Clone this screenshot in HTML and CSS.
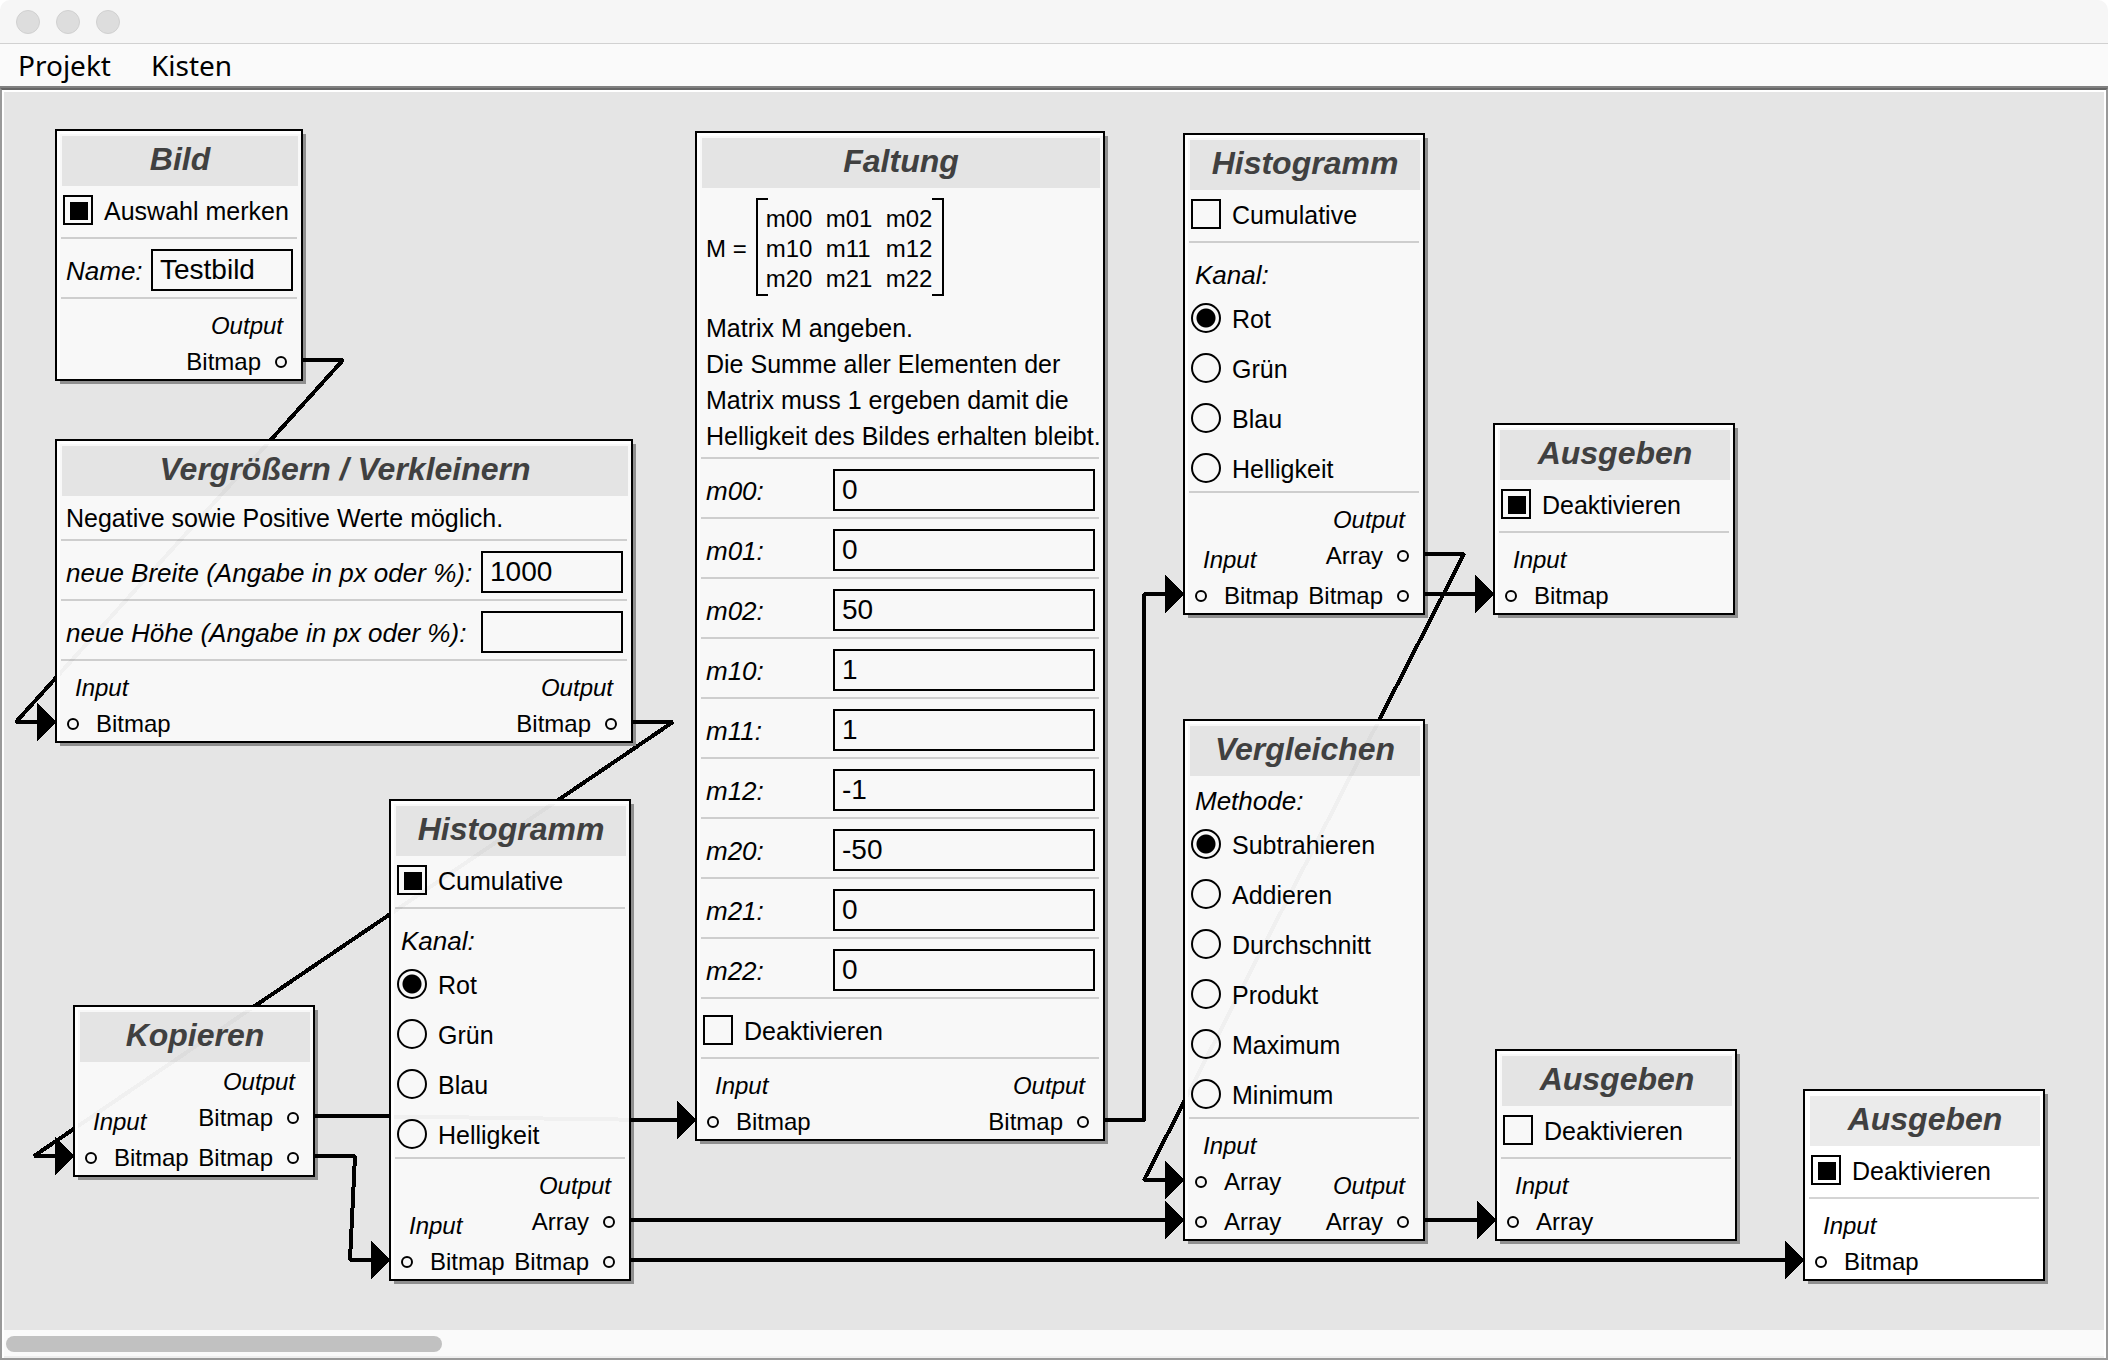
FILE: index.html
```html
<!DOCTYPE html>
<html lang="de">
<head>
<meta charset="utf-8">
<title>Kisten</title>
<link rel="stylesheet" href="styles.css">
</head>
<body>
<div class="window">
  <header class="titlebar"><span class="light"></span><span class="light"></span><span class="light"></span></header>
  <nav class="menubar"><button type="button">Projekt</button><button type="button">Kisten</button></nav>
  <main class="frame">
    <div class="canvas">
      <svg class="wires" width="2100" height="1238" viewBox="4 92 2100 1238" aria-hidden="true">
        <path d="M301 360H343L16 722H56"/>
        <path d="M631 722H673L34 1156H74"/>
        <path d="M313 1116H355L656 1120H696"/>
        <path d="M313 1156H355L350 1260H390"/>
        <path d="M629 1220H1184M629 1260H1804"/>
        <path d="M1103 1120H1144V594H1184"/>
        <path d="M1423 554H1464L1144 1180H1184"/>
        <path d="M1423 594H1494M1423 1220H1496"/>
      </svg>

      <section class="node bild">
        <h2>Bild</h2>
        <div class="row"><label class="option"><input type="checkbox" checked>Auswahl merken</label></div>
        <div class="row field"><label for="name">Name:</label><input id="name" type="text" value="Testbild"></div>
        <div class="ports">
          <div class="outputs"><h3>Output</h3><p>Bitmap</p></div>
        </div>
      </section>

      <section class="node skalieren">
        <h2>Vergrößern / Verkleinern</h2>
        <div class="prose"><p>Negative sowie Positive Werte möglich.</p></div>
        <div class="row field"><label for="breite">neue Breite (Angabe in px oder %):</label><input id="breite" type="text" value="1000"></div>
        <div class="row field"><label for="hoehe">neue Höhe (Angabe in px oder %):</label><input id="hoehe" type="text" value=""></div>
        <div class="ports">
          <div class="inputs"><h3>Input</h3><p>Bitmap</p></div>
          <div class="outputs"><h3>Output</h3><p>Bitmap</p></div>
        </div>
      </section>

      <section class="node kopieren">
        <h2>Kopieren</h2>
        <div class="ports">
          <div class="inputs"><h3>Input</h3><p>Bitmap</p></div>
          <div class="outputs"><h3>Output</h3><p>Bitmap</p><p>Bitmap</p></div>
        </div>
      </section>

      <section class="node histogramm-a">
        <h2>Histogramm</h2>
        <div class="row"><label class="option"><input type="checkbox" checked>Cumulative</label></div>
        <div class="row choices" role="radiogroup" aria-labelledby="kanal-a">
          <span class="caption" id="kanal-a">Kanal:</span>
          <label class="option"><input type="radio" name="kanal-a" checked>Rot</label>
          <label class="option"><input type="radio" name="kanal-a">Grün</label>
          <label class="option"><input type="radio" name="kanal-a">Blau</label>
          <label class="option"><input type="radio" name="kanal-a">Helligkeit</label>
        </div>
        <div class="ports">
          <div class="inputs"><h3>Input</h3><p>Bitmap</p></div>
          <div class="outputs"><h3>Output</h3><p>Array</p><p>Bitmap</p></div>
        </div>
      </section>

      <section class="node faltung">
        <h2>Faltung</h2>
        <div class="prose">
          <div class="matrix">
            <span>M =</span>
            <div class="bracket">
              <span>m00</span><span>m01</span><span>m02</span>
              <span>m10</span><span>m11</span><span>m12</span>
              <span>m20</span><span>m21</span><span>m22</span>
            </div>
          </div>
          <p>Matrix M angeben.<br>Die Summe aller Elementen der<br>Matrix muss 1 ergeben damit die<br>Helligkeit des Bildes erhalten bleibt.</p>
        </div>
        <div class="row field"><label for="m00">m00:</label><input id="m00" type="text" value="0"></div>
        <div class="row field"><label for="m01">m01:</label><input id="m01" type="text" value="0"></div>
        <div class="row field"><label for="m02">m02:</label><input id="m02" type="text" value="50"></div>
        <div class="row field"><label for="m10">m10:</label><input id="m10" type="text" value="1"></div>
        <div class="row field"><label for="m11">m11:</label><input id="m11" type="text" value="1"></div>
        <div class="row field"><label for="m12">m12:</label><input id="m12" type="text" value="-1"></div>
        <div class="row field"><label for="m20">m20:</label><input id="m20" type="text" value="-50"></div>
        <div class="row field"><label for="m21">m21:</label><input id="m21" type="text" value="0"></div>
        <div class="row field"><label for="m22">m22:</label><input id="m22" type="text" value="0"></div>
        <div class="row"><label class="option"><input type="checkbox">Deaktivieren</label></div>
        <div class="ports">
          <div class="inputs"><h3>Input</h3><p>Bitmap</p></div>
          <div class="outputs"><h3>Output</h3><p>Bitmap</p></div>
        </div>
      </section>

      <section class="node histogramm-b">
        <h2>Histogramm</h2>
        <div class="row"><label class="option"><input type="checkbox">Cumulative</label></div>
        <div class="row choices" role="radiogroup" aria-labelledby="kanal-b">
          <span class="caption" id="kanal-b">Kanal:</span>
          <label class="option"><input type="radio" name="kanal-b" checked>Rot</label>
          <label class="option"><input type="radio" name="kanal-b">Grün</label>
          <label class="option"><input type="radio" name="kanal-b">Blau</label>
          <label class="option"><input type="radio" name="kanal-b">Helligkeit</label>
        </div>
        <div class="ports">
          <div class="inputs"><h3>Input</h3><p>Bitmap</p></div>
          <div class="outputs"><h3>Output</h3><p>Array</p><p>Bitmap</p></div>
        </div>
      </section>

      <section class="node vergleichen">
        <h2>Vergleichen</h2>
        <div class="row choices" role="radiogroup" aria-labelledby="methode">
          <span class="caption" id="methode">Methode:</span>
          <label class="option"><input type="radio" name="methode" checked>Subtrahieren</label>
          <label class="option"><input type="radio" name="methode">Addieren</label>
          <label class="option"><input type="radio" name="methode">Durchschnitt</label>
          <label class="option"><input type="radio" name="methode">Produkt</label>
          <label class="option"><input type="radio" name="methode">Maximum</label>
          <label class="option"><input type="radio" name="methode">Minimum</label>
        </div>
        <div class="ports">
          <div class="inputs"><h3>Input</h3><p>Array</p><p>Array</p></div>
          <div class="outputs"><h3>Output</h3><p>Array</p></div>
        </div>
      </section>

      <section class="node ausgeben-a">
        <h2>Ausgeben</h2>
        <div class="row"><label class="option"><input type="checkbox" checked>Deaktivieren</label></div>
        <div class="ports">
          <div class="inputs"><h3>Input</h3><p>Bitmap</p></div>
        </div>
      </section>

      <section class="node ausgeben-b">
        <h2>Ausgeben</h2>
        <div class="row"><label class="option"><input type="checkbox">Deaktivieren</label></div>
        <div class="ports">
          <div class="inputs"><h3>Input</h3><p>Array</p></div>
        </div>
      </section>

      <section class="node ausgeben-c active">
        <h2>Ausgeben</h2>
        <div class="row"><label class="option"><input type="checkbox" checked>Deaktivieren</label></div>
        <div class="ports">
          <div class="inputs"><h3>Input</h3><p>Bitmap</p></div>
        </div>
      </section>

      <svg class="wires plugs" width="2100" height="1238" viewBox="4 92 2100 1238" aria-hidden="true">
        <path d="M301 360h10M631 722h10M313 1116h10M313 1156h10M630 1120h10M629 1220h10M629 1260h10M1103 1120h10M1423 554h10M1423 594h10M1423 1220h10"/>
        <g class="heads">
          <path d="M37 703v38l20-19z"/>
          <path d="M55 1137v38l20-19z"/>
          <path d="M371 1241v38l20-19z"/>
          <path d="M677 1101v38l20-19z"/>
          <path d="M1165 575v38l20-19z"/>
          <path d="M1165 1161v38l20-19z"/>
          <path d="M1165 1201v38l20-19z"/>
          <path d="M1475 575v38l20-19z"/>
          <path d="M1477 1201v38l20-19z"/>
          <path d="M1785 1241v38l20-19z"/>
        </g>
      </svg>
    </div>
    <div class="scrollbar"><div class="thumb"></div></div>
  </main>
</div>
</body>
</html>
```
FILE: styles.css
```css
*, *::before, *::after { box-sizing: border-box; }

body {
  margin: 0;
  background: #fff;
  color: #000;
  font: 24px/36px "Liberation Sans", Arial, sans-serif;
}

.window {
  display: flex;
  flex-direction: column;
  height: calc(100vh - 2px);
  overflow: hidden;
  border-radius: 10px 10px 0 0;
}

/* window chrome */
.titlebar {
  display: flex;
  align-items: center;
  gap: 16px;
  height: 44px;
  padding: 0 16px;
  background: #f6f6f6;
  border-bottom: 1px solid #d1d1d1;
}
.light {
  width: 24px;
  height: 24px;
  border: 1px solid #d0d0d0;
  border-radius: 50%;
  background: #dddddd;
}
.menubar {
  display: flex;
  gap: 40px;
  height: 44px;
  padding: 0 18px;
  border-bottom: 2px solid #808080;
  background: #fafafa;
}
.menubar button {
  padding: 0;
  border: 0;
  background: none;
  color: #000;
  font: 28px/42px "Noto Sans", sans-serif;
}

.frame {
  flex: 1;
  min-height: 0;
  display: flex;
  flex-direction: column;
  border: 2px solid #999999;
  border-top-color: #666666;
  padding: 2px 2px 0;
  background: #fff;
}
.canvas {
  position: relative;
  flex: 1;
  min-height: 0;
  overflow: hidden;
  background: #e5e5e5;
}
.scrollbar {
  height: 28px;
  padding: 6px 2px 4px;
  border-bottom: 2px solid #eeeeee;
  background: #fafafa;
}
.thumb {
  width: 20.8%;
  height: 16px;
  border-radius: 8px;
  background: #c1c1c1;
}

/* connections */
.wires {
  position: absolute;
  left: 0;
  top: 0;
  fill: none;
  stroke: #000;
  stroke-width: 4;
  stroke-linejoin: bevel;
  shape-rendering: crispEdges;
}
.plugs { pointer-events: none; }
.heads { fill: #000; stroke: none; }

/* boxes on the canvas */
.node {
  position: absolute;
  width: 242px;
  padding: 5px 4px 0;
  border: 2px solid #000;
  background: rgba(249, 249, 249, .965);
  box-shadow: 4px 4px 0 -1px #8f8f8f, inset 3px 3px 0 #fff;
}
.active { background: #fff; }
.bild { left: 51px; top: 37px; width: 248px; }
.skalieren { left: 51px; top: 347px; width: 578px; }
.kopieren { left: 69px; top: 913px; }
.histogramm-a { left: 385px; top: 707px; }
.faltung { left: 691px; top: 39px; width: 410px; }
.histogramm-b { left: 1179px; top: 41px; }
.vergleichen { left: 1179px; top: 627px; }
.ausgeben-a { left: 1489px; top: 331px; }
.ausgeben-b { left: 1491px; top: 957px; }
.ausgeben-c { left: 1799px; top: 997px; }

.node h2 {
  height: 50px;
  margin: 0 -1px 0 1px;
  background: rgba(0, 0, 0, .08);
  color: #404040;
  font: italic bold 32px/46px "Liberation Sans", Arial, sans-serif;
  text-align: center;
}

.row, .prose { border-bottom: 2px solid rgba(0, 0, 0, .17); }
.row { padding: 16px 2px 12px; }
h2 + .row { padding-top: 9px; }

.option {
  display: flex;
  align-items: flex-start;
  gap: 11px;
  height: 30px;
  font-size: 25px;
  line-height: 32px;
}
.option input {
  appearance: none;
  flex: none;
  width: 30px;
  height: 30px;
  margin: 0;
  border: 2px solid #000;
}
.option input[type="checkbox"]:checked {
  background: linear-gradient(#000, #000) 5px 5px / 18px 18px no-repeat;
}
.option input[type="radio"] { border-radius: 50%; }
.option input[type="radio"]:checked {
  background: radial-gradient(circle, #000 9px, transparent 10px);
}

.row.field {
  display: flex;
  justify-content: space-between;
  align-items: center;
  padding: 10px 4px 6px 5px;
}
.field label, .caption { font-size: 26px; font-style: italic; }
.field label { padding-top: 2px; }
.field input {
  width: 142px;
  height: 42px;
  padding: 0 7px;
  border: 2px solid #000;
  border-radius: 0;
  background: none;
  color: #000;
  font: 28px "Liberation Sans", Arial, sans-serif;
}
.faltung .field input { width: 262px; }

.row.choices {
  display: flex;
  flex-direction: column;
  gap: 20px;
  padding-bottom: 8px;
}
.caption {
  height: 24px;
  padding-left: 4px;
  line-height: 32px;
}
h2 + .row.choices { padding-top: 9px; }

.prose { padding: 4px 5px 3px; }
.prose p {
  margin: 0;
  font-size: 25px;
  white-space: nowrap;
}

.matrix {
  display: flex;
  align-items: center;
  gap: 9px;
  height: 118px;
  padding: 6px 0 14px;
}
.bracket {
  display: grid;
  grid-template-columns: repeat(3, 60px);
  align-content: center;
  width: 188px;
  height: 98px;
  padding: 3px 0 0 8px;
  border: solid #000;
  border-width: 0 2px;
  background:
    linear-gradient(#000, #000) 0 0 / 10px 2px no-repeat,
    linear-gradient(#000, #000) 100% 0 / 10px 2px no-repeat,
    linear-gradient(#000, #000) 0 100% / 10px 2px no-repeat,
    linear-gradient(#000, #000) 100% 100% / 10px 2px no-repeat;
  line-height: 30px;
}
.matrix > span { padding-top: 3px; }

/* inputs and outputs of a box */
.ports {
  display: flex;
  align-items: flex-end;
  padding-top: 8px;
}
h2 + .ports { padding-top: 1px; }
.ports > div { display: grid; }
.ports h3 {
  height: 36px;
  margin: 0;
  padding: 0 14px;
  font: italic 24px/38px "Liberation Sans", Arial, sans-serif;
}
.ports p {
  display: flex;
  align-items: center;
  height: 36px;
  margin: 0;
  padding-top: 2px;
  line-height: 34px;
}
.ports p + p { margin-top: 4px; }
.inputs p::before, .outputs p::after {
  content: "";
  width: 12px;
  height: 12px;
  border: 2px solid #000;
  border-radius: 50%;
}
.inputs p { gap: 17px; padding-left: 6px; }
.outputs { margin-left: auto; }
.outputs h3 { text-align: right; }
.outputs p { gap: 14px; justify-content: flex-end; padding-right: 10px; }
```
